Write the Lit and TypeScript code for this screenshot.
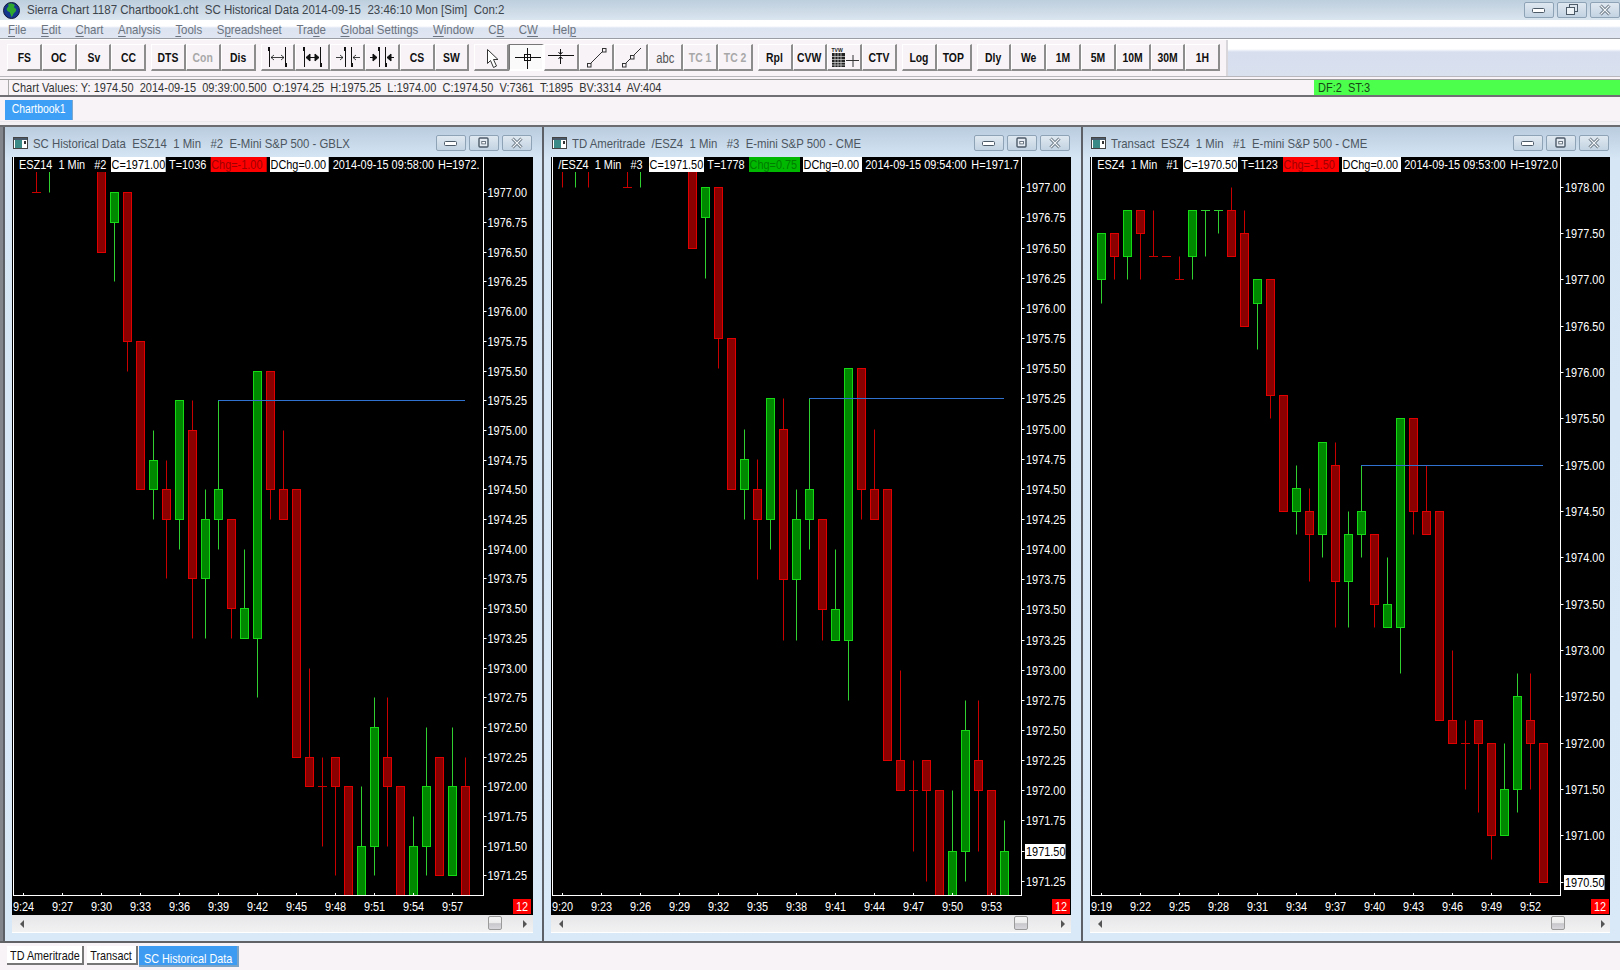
import { LitElement, html, css, svg } from "lit";
import { customElement } from "lit/decorators.js";

type Bar = [number, "r" | "g", number, number, number, number];
const BARS: Bar[] = [
  [19,"g",1977.5,1977.5,1977,1976.75],[20,"r",1977.5,1977.5,1977.25,1977],[21,"g",1977.75,1977.75,1977.25,1977],
  [22,"r",1977.75,1977.75,1977.5,1977],[23,"r",1977.75,1977.25,1977.25,1977.25],[24,"r",1977.25,1977.25,1977.25,1977.25],
  [25,"r",1977.25,1977,1977,1977],[26,"g",1977.75,1977.75,1977.25,1977],[27,"g",1977.75,1977.75,1977.75,1977.25],
  [28,"g",1977.75,1977.75,1977.75,1977.5],[29,"r",1978,1977.75,1977.25,1977.25],[30,"r",1977.75,1977.5,1976.5,1976.5],
  [31,"g",1977,1977,1976.75,1976.25],[32,"r",1977,1977,1975.75,1975.5],[33,"r",1975.75,1975.75,1974.5,1974.5],
  [34,"g",1975,1974.75,1974.5,1974.25],[35,"r",1974.75,1974.5,1974.25,1973.75],[36,"g",1975.25,1975.25,1974.25,1974],
  [37,"r",1975.25,1975,1973.75,1973.25],[38,"g",1974.5,1974.25,1973.75,1973.25],[39,"g",1975.25,1974.5,1974.25,1974],
  [40,"r",1974.25,1974.25,1973.5,1973.25],[41,"g",1974,1973.5,1973.25,1973.25],[42,"g",1975.5,1975.5,1973.25,1972.75],
  [43,"r",1975.5,1975.5,1974.5,1974.25],[44,"r",1975,1974.5,1974.25,1974.25],[45,"r",1974.5,1974.5,1972.25,1972.25],
  [46,"r",1973,1972.25,1972,1972],[47,"r",1972.25,1972,1972,1971.5],[48,"r",1972.25,1972.25,1972,1971.25],
  [49,"r",1972,1972,1971,1970.75],[50,"g",1972,1971.5,1971,1971],[51,"g",1972.75,1972.5,1971.5,1971.25],
  [52,"r",1972.75,1972.25,1972,1971.5],[53,"r",1972,1972,1970.5,1970.5],[54,"g",1971.75,1971.5,1971,1971],
  [55,"g",1972.5,1972,1971.5,1971.25],[56,"r",1972.25,1972.25,1971.25,1971.25],[57,"g",1972.5,1972,1971.25,1971.25],
  [58,"r",1972.25,1972,1971,1971],
];

interface Head { x: number; w: number; t: string; bg?: string; fg?: string; }
interface Chart {
  title: string; left: number; width: number; axisX: number; x0: number; firstMin: number; lastMin: number;
  refPrice: number; refY: number; ppp: number; top: number; bottom: number; step: number; hl?: number;
  blue: [number, number, number]; labelX: number; head: Head[]; thumb: number; over?: Record<number, number>; red: number;
  arrowL: number; arrowR: number;
}
const R = "#ff0000", RT = "#a00000", G = "#00b800", GT = "#007c00", W = "#ffffff", B = "#000000";
const CHARTS: Chart[] = [
  { title: "SC Historical Data  ESZ14  1 Min   #2  E-Mini S&P 500 - GBLX", left: 12, width: 521, axisX: 483.5, x0: 23.5, firstMin: 24, lastMin: 58,
    refPrice: 1977, refY: 192.3, ppp: 118.8, top: 1977, bottom: 1971.25, step: 0.25, blue: [218, 465, 1975.25], labelX: 487.5, thumb: 488, red: 513, arrowL: 20, arrowR: 523,
    head: [
      { x: 19, w: 88, t: "ESZ14  1 Min   #2" }, { x: 111, w: 54.7, t: "C=1971.00", bg: W, fg: B }, { x: 169, w: 38, t: "T=1036" },
      { x: 210.7, w: 56, t: "Chg=-1.00", bg: R, fg: RT }, { x: 270, w: 58.7, t: "DChg=0.00", bg: W, fg: B },
      { x: 332.7, w: 102, t: "2014-09-15 09:58:00" }, { x: 438, w: 44, t: "H=1972." } ] },
  { title: "TD Ameritrade  /ESZ4  1 Min   #3  E-mini S&P 500 - CME", left: 551, width: 520, axisX: 1021.5, x0: 562.5, firstMin: 20, lastMin: 54,
    refPrice: 1977, refY: 187.3, ppp: 120.6, top: 1977, bottom: 1971.25, step: 0.25, hl: 1971.5, blue: [809, 1004, 1975.25], labelX: 1026, thumb: 1014, red: 1052, arrowL: 559, arrowR: 1061,
    head: [
      { x: 558.3, w: 87, t: "/ESZ4  1 Min   #3" }, { x: 649, w: 55, t: "C=1971.50", bg: W, fg: B }, { x: 707.3, w: 38.4, t: "T=1778" },
      { x: 749, w: 51, t: "Chg=0.75", bg: G, fg: GT }, { x: 803, w: 59, t: "DChg=0.00", bg: W, fg: B },
      { x: 865.3, w: 102.4, t: "2014-09-15 09:54:00" }, { x: 971.3, w: 48.7, t: "H=1971.7" } ] },
  { title: "Transact  ESZ4  1 Min   #1  E-mini S&P 500 - CME", left: 1090, width: 520, axisX: 1560.5, x0: 1101.5, firstMin: 19, lastMin: 53,
    refPrice: 1978, refY: 186.7, ppp: 92.67, top: 1978, bottom: 1970.5, step: 0.5, hl: 1970.5, blue: [1361, 1543, 1975], labelX: 1565, thumb: 1551, red: 1591, arrowL: 1098, arrowR: 1601,
    over: { 39: 1975 },
    head: [
      { x: 1097.3, w: 82.7, t: "ESZ4  1 Min   #1" }, { x: 1183, w: 55, t: "C=1970.50", bg: W, fg: B }, { x: 1241.3, w: 38, t: "T=1123" },
      { x: 1283, w: 56, t: "Chg=-1.50", bg: R, fg: RT }, { x: 1342, w: 59, t: "DChg=0.00", bg: W, fg: B },
      { x: 1404.3, w: 102.4, t: "2014-09-15 09:53:00" }, { x: 1510.3, w: 49, t: "H=1972.0" } ] },
];

const TOP = 157, PLOT_B = 895, BOT = 915, SX = 0.84;
const crisp = (v: number) => Math.round(v) + 0.5;
const label = (x: number, y: number, s: string, fill: string, anchor = "start") =>
  svg`<text class="t" transform="translate(${x} ${y}) scale(${SX} 1)" text-anchor=${anchor} fill=${fill}>${s}</text>`;

function candle(c: Chart, b: Bar) {
  const [m, col, hi0, top, bot, lo] = b;
  const hi = c.over?.[m] ?? hi0;
  const x = c.x0 + (m - c.firstMin) * 13;
  const y = (p: number) => crisp(c.refY + (c.refPrice - p) * c.ppp);
  const edge = col === "r" ? "#e00000" : "#14d914";
  const fill = col === "r" ? "#8a0000" : "#008800";
  const wick = col === "r" ? "#c80000" : "#2fd02f";
  const parts = [];
  if (hi !== lo) parts.push(svg`<line x1=${x} x2=${x} y1=${y(hi)} y2=${y(lo)} stroke=${wick}></line>`);
  if (top === bot) parts.push(svg`<line x1=${x - 4.5} x2=${x + 4.5} y1=${y(top)} y2=${y(top)} stroke=${wick}></line>`);
  else parts.push(svg`<rect x=${x - 4} y=${y(top)} width="8" height=${y(bot) - y(top)} fill=${fill} stroke=${edge}></rect>`);
  return parts;
}

function chartSvg(c: Chart) {
  const bars = BARS.filter((b) => b[0] >= c.firstMin && b[0] <= c.lastMin);
  const prices: number[] = [];
  for (let p = c.top; p >= c.bottom - 0.001; p -= c.step) prices.push(p);
  const ticks: number[] = [];
  for (let k = 0; k < 12; k++) ticks.push(c.firstMin + k * 3);
  const y = (p: number) => c.refY + (c.refPrice - p) * c.ppp;
  const xt = (m: number) => c.x0 + (m - c.firstMin) * 13;
  const by = crisp(y(c.blue[2]));
  return html`<svg class="plot" width=${c.width} height=${BOT - TOP} viewBox="${c.left} ${TOP} ${c.width} ${BOT - TOP}">
    ${bars.map((b) => candle(c, b))}
    ${svg`<line x1=${c.blue[0]} x2=${c.blue[1]} y1=${by} y2=${by} stroke="#2f72d0"></line>`}
    ${svg`<rect x=${c.left} y=${TOP} width=${c.width} height="15" fill="#000"></rect>`}
    ${svg`<rect x=${c.left} y=${PLOT_B} width=${c.width} height=${BOT - PLOT_B} fill="#000"></rect>`}
    ${svg`<rect x=${c.axisX} y=${TOP} width=${c.left + c.width - c.axisX} height=${BOT - TOP} fill="#000"></rect>`}
    ${svg`<line x1=${c.left + 1.5} x2=${c.left + 1.5} y1=${TOP} y2=${PLOT_B} stroke="#fff"></line>`}
    ${svg`<line x1=${c.left + 1} x2=${c.axisX + 0.5} y1=${PLOT_B + 0.5} y2=${PLOT_B + 0.5} stroke="#fff"></line>`}
    ${svg`<line x1=${c.axisX} x2=${c.axisX} y1=${TOP} y2=${PLOT_B} stroke="#fff"></line>`}
    ${prices.map((p) => svg`
      <line x1=${c.axisX} x2=${c.axisX + 3} y1=${crisp(y(p))} y2=${crisp(y(p))} stroke="#fff"></line>
      ${p === c.hl ? svg`<rect x=${c.labelX - 1} y=${crisp(y(p)) - 7.5} width="40.5" height="15" fill="#fff"></rect>` : ""}
      ${label(c.labelX, crisp(y(p)) + 4.5, p.toFixed(2), p === c.hl ? "#000" : "#fff")}`)}
    ${ticks.map((m) => svg`
      <line x1=${xt(m)} x2=${xt(m)} y1=${PLOT_B - 2} y2=${PLOT_B} stroke="#fff"></line>
      ${label(xt(m), 911, "9:" + String(m), "#fff", "middle")}`)}
    ${svg`<rect x=${c.red} y="899" width="18" height="15" fill="#ff0000"></rect>`}
    ${label(c.red + 9, 911, "12", "#fff", "middle")}
    ${c.head.map((h) => svg`
      ${h.bg ? svg`<rect x=${h.x} y=${TOP} width=${h.w} height="15" fill=${h.bg}></rect>` : ""}
      ${label(h.x + (h.bg ? 0.5 : 0), 169, h.t, h.fg ?? "#fff")}`)}
  </svg>`;
}

const wrap = (b: unknown) => html`<svg class="ic" width="34" height="26" viewBox="0 0 34 26" fill="none" stroke="#111">${b}</svg>`;
const bars = (a: number, b: number) => svg`<path d="M${a}.5 3V23M${a - 1}.5 3V7M${b}.5 3V23M${b + 1}.5 19V23"></path>`;
const ICONS: Record<string, unknown> = {
  exp: wrap(svg`${bars(8, 24)}<path d="M10 13.5H23M13 11l-3 2.5 3 2.5M20 11l3 2.5-3 2.5" stroke-width=".8"></path>`),
  expB: wrap(svg`${bars(8, 24)}<path d="M10 13.5H23" ></path><path d="M14 10l-4 3.5 4 3.5zM19 10l4 3.5-4 3.5z" fill="#111"></path>`),
  con: wrap(svg`${bars(14, 20)}<path d="M5 13.5H12M9 11l3 2.5-3 2.5M29 13.5H22M25 11l-3 2.5 3 2.5" stroke-width=".8"></path>`),
  conB: wrap(svg`${bars(14, 20)}<path d="M5 13.5H12M29 13.5H22"></path><path d="M8 10l4 3.5-4 3.5zM26 10l-4 3.5 4 3.5z" fill="#111"></path>`),
  cursor: wrap(svg`<path d="M12.5 5.5V19.5L15.5 16.5L18.5 23.5L21.5 22L18.5 15.5H23Z" fill="#fff" stroke="#333"></path>`),
  cross: wrap(svg`<path d="M5 13.5H31M17.5 4V25"></path><rect x="14.5" y="10.5" width="6" height="6"></rect>`),
  split: wrap(svg`<path d="M4 11.5H30M16.5 5V10M16.5 13V20M14.5 8l2 2.5 2-2.5M14.5 15l2-2.5 2 2.5"></path>`),
  line: wrap(svg`<path d="M12 19L23 8" stroke="#333"></path><rect x="8.5" y="19.5" width="3.5" height="3.5" stroke="#333"></rect><rect x="23.5" y="4.5" width="3.5" height="3.5" stroke="#333"></rect>`),
  line2: wrap(svg`<path d="M12 19L17 14M20 11L27 4" stroke="#333"></path><rect x="8.5" y="19.5" width="3.5" height="3.5" stroke="#333"></rect><rect x="16.5" y="11.5" width="3.5" height="3.5" stroke="#333"></rect>`),
  grid: html`<svg class="ic" width="34" height="26" viewBox="0 0 34 26" fill="none" stroke="#111">
    ${svg`<text class="tiny" transform="translate(3.5 8) scale(.85 1)" fill="#222" stroke="none">TVW</text>
    <rect x="4" y="9" width="13" height="14" fill="#222" stroke="none"></rect>
    <path d="M4 12.5H17M4 15.5H17M4 18.5H17M4 21H17M7 9V23M10 9V23M13 9V23" stroke="#ddd" stroke-width=".7"></path>
    <path d="M18 16.5H31M25 11V23" stroke="#333"></path>`}
  </svg>`,
};

type Btn = { t?: string; ic?: string; cls?: string };
const GROUPS: Btn[][] = [
  [{ t: "FS" }, { t: "OC" }, { t: "Sv" }, { t: "CC" }],
  [{ t: "DTS" }, { t: "Con", cls: "dis" }, { t: "Dis" }],
  [{ ic: "exp" }, { ic: "expB" }, { ic: "con" }, { ic: "conB" }, { t: "CS" }, { t: "SW" }],
  [{ ic: "cursor" }, { ic: "cross", cls: "on" }, { ic: "split" }, { ic: "line" }, { ic: "line2" }, { t: "abc", cls: "abc" }, { t: "TC 1", cls: "dis" }, { t: "TC 2", cls: "dis" }],
  [{ t: "Rpl" }, { t: "CVW" }, { ic: "grid" }, { t: "CTV" }],
  [{ t: "Log" }, { t: "TOP" }],
  [{ t: "Dly" }, { t: "We" }, { t: "1M" }, { t: "5M" }, { t: "10M" }, { t: "30M" }, { t: "1H" }],
];

const MENU: [string, string, string][] = [
  ["", "F", "ile"], ["", "E", "dit"], ["", "C", "hart"], ["", "A", "nalysis"], ["", "T", "ools"], ["S", "p", "readsheet"],
  ["Tra", "d", "e"], ["", "G", "lobal Settings"], ["", "W", "indow"], ["C", "B", ""], ["C", "W", ""], ["Hel", "p", ""],
];

const ctlMin = html`<svg width="14" height="8" viewBox="0 0 14 8"><rect x=".5" y="2.5" width="12" height="4" rx="1" fill="#fff" stroke="#4c5a68"></rect></svg>`;
const ctlBox = html`<svg width="12" height="12" viewBox="0 0 12 12"><rect x="1" y="1" width="9" height="9" rx="1" fill="#e4ebf2" stroke="#4c5a68" stroke-width="1.4"></rect><rect x="3.8" y="4.5" width="3.6" height="2.4" fill="#fff" stroke="#4c5a68" stroke-width=".8"></rect></svg>`;
const ctlRest = html`<svg width="14" height="12" viewBox="0 0 14 12"><rect x="4.5" y=".5" width="8" height="7" fill="#dce5ee" stroke="#4c5a68"></rect><rect x="1.5" y="3.5" width="8" height="7" fill="#eef3f8" stroke="#4c5a68"></rect></svg>`;
const ctlX = html`<svg width="14" height="12" viewBox="0 0 14 12"><path d="M2.5 1.5L11.5 10.5M11.5 1.5L2.5 10.5" stroke="#5c6a78" stroke-width="3"></path><path d="M2.5 1.5L11.5 10.5M11.5 1.5L2.5 10.5" stroke="#f4f7fa" stroke-width="1.2"></path></svg>`;

const docIcon = html`<svg class="doc" width="16" height="13" viewBox="0 0 16 13"><rect x=".5" y=".5" width="14" height="11" fill="#fff" stroke="#444"></rect><rect x="1" y="1" width="13" height="2" fill="#4a5a6a"></rect><rect x="2" y="3" width="7" height="8" fill="#3a8a88"></rect><rect x="11" y="4" width="2" height="3" fill="#333"></rect></svg>`;

const globe = html`<svg class="globe" width="17" height="17" viewBox="0 0 17 17">
  <circle cx="8.5" cy="8.5" r="8" fill="#14368f"></circle>
  <path d="M5 1.5C8 .8 11 1.5 12 3.5C10.5 4 11 6 12.5 6.5C14 7 13 10 11 11C10 12 10 14 8.5 15C7.5 13 7.5 11 6.5 10C4.5 9.5 3 8 4 6C5.5 5.5 6 3 5 1.5Z" fill="#2fa82f"></path>
  <circle cx="8.5" cy="8.5" r="8" fill="none" stroke="#111838" stroke-width="1"></circle></svg>`;

@customElement("app-root")
export class AppRoot extends LitElement {
  static styles = css`
    :host { display: block; width: 1620px; height: 970px; overflow: hidden; background: #f7f3f7; color: #333;
      font-family: "Liberation Sans", sans-serif; font-size: 13px; line-height: 15px; }
    .t { font-family: "Liberation Sans", sans-serif; font-size: 13px; white-space: pre; }
    .tiny { font-family: "Liberation Sans", sans-serif; font-size: 6px; font-weight: bold; }
    .sq { display: inline-block; transform: scaleX(.848); transform-origin: 0 50%; white-space: pre; }
    .sc { display: inline-block; transform: scaleX(.8); transform-origin: 50% 50%; white-space: pre; }
    .title { height: 20px; display: flex; align-items: center; background: linear-gradient(#bdcedd, #dae5ef); color: #3c444c; white-space: pre; }
    .title .sq { margin-top: -2px; transform: scaleX(.886); }
    .globe { margin: 0 7px 0 3px; flex: none; }
    .ctls { margin-left: auto; display: flex; gap: 3px; }
    .ctl { width: 30px; height: 16px; box-sizing: border-box; display: flex; align-items: center; justify-content: center;
      border: 1px solid #8fa3b6; border-radius: 2px; background: linear-gradient(#dfe8f0, #c3d3e2); }
    .menu { height: 19px; box-sizing: border-box; border-bottom: 1px solid #9a9ea4; padding: 2px 0 0 8px;
      background: linear-gradient(#fff 0, #fff 6px, #dde4f1 8px, #e0e6f2 100%); color: #6c7480; }
    .menu .in { display: flex; gap: 16.55px; transform: scaleX(.882); transform-origin: 0 50%; width: 900px; }
    .bar { height: 38px; box-sizing: border-box; display: flex; border-bottom: 1px solid #b8b8bc; background: #f7f3f7; border-top: 1px solid #fff; }
    .groups { width: 1228px; flex: none; box-sizing: border-box; padding: 4px 0 0 7px; display: flex; gap: 5px; border-right: 2px solid #d8d6da; }
    .group { display: flex; }
    .btn { width: 34.8px; height: 27px; box-sizing: border-box; display: flex; align-items: center; justify-content: center; background: #f7f3f7;
      border: 1px solid; border-color: #fff #8c8c8c #8c8c8c #fff; border-width: 1px 2px 2px 1px; font-weight: bold; color: #101010; }
    .btn.dis { color: #a8a8a8; }
    .btn.abc { font-weight: normal; font-size: 14px; color: #555; padding-top: 3px; }
    .btn.on { border-color: #777 #fff #fff #777; background: #fbfafb; }
    .ic { flex: none; margin: -1px -2px 0 -1px; }
    .rest { flex: 1; background: linear-gradient(#fff 0, #fff 9px, #d7deee 12px, #d9e0ee 100%); }
    .status { height: 18px; margin-top: 2px; box-sizing: border-box; display: flex; border-top: 1px solid #9c9c9c; border-bottom: 2px solid #707074; white-space: pre; }
    .sv { width: 1312px; flex: none; box-sizing: border-box; padding-left: 8px; }
    .sv > div { border-left: 1px solid #aaa; padding-left: 3px; }
    .df { flex: 1; margin-left: 2px; background: #4dff4d; padding-left: 4px; color: #154515; }
    .tabstrip { height: 28px; box-sizing: border-box; padding: 3px 0 0 5px; background: linear-gradient(#f7f3f7 0, #f7f3f7 24px, #e2e0e4 24px, #f3f1f4 25px); }
    .tab0 { width: 68px; height: 20px; box-sizing: border-box; background: #3da0f6; color: #fff; text-align: center; line-height: 18px; border-right: 1px solid #7fa8cc; }
    .desk { height: 818px; box-sizing: border-box; border-top: 2px solid #6a6c70; border-bottom: 2px solid #606266; padding-left: 3px; display: grid;
      grid-template-columns: repeat(3, 539px); background: #777a80; box-shadow: inset 3px 0 0 #82868c; }
    .win { box-sizing: border-box; border-left: 2px solid #5c6066; padding-left: 7px; display: flex; flex-direction: column;
      background: linear-gradient(#b9ccde 0, #d6e6f5 32px, #d9e9f8 100%); }
    .wt { height: 30px; display: flex; align-items: center; padding: 2px 1px 0 1px; box-sizing: border-box; color: #4c5660; white-space: pre; }
    .wt .sq { transform: scaleX(.874); }
    .doc { margin-right: 4px; flex: none; }
    .plot { display: block; background: #000; }
    .sb { height: 17px; position: relative; background: linear-gradient(#e6e6e8, #f2f2f3); border-bottom: 1px solid #fff; box-sizing: content-box; }
    .arr { position: absolute; top: 5px; width: 0; height: 0; border: 4px solid transparent; }
    .arr.l { border-right: 4px solid #555; border-left-width: 0; }
    .arr.r { border-left: 4px solid #555; border-right-width: 0; }
    .thumb { position: absolute; top: 1px; width: 14px; height: 14px; box-sizing: border-box; border: 1px solid #9a9a9a; border-radius: 2px; background: linear-gradient(#f4f4f4 0, #ececec 50%, #c8c8cc 55%, #d8d8dc 100%); }
    .tabs { height: 27px; box-sizing: border-box; padding: 3px 0 0 7px; display: flex; gap: 3px; align-items: flex-start; }
    .tb { height: 19px; box-sizing: border-box; background: #fff; border-right: 2px solid #777; border-bottom: 2px solid #777; line-height: 20px; color: #111; white-space: nowrap; display: flex; justify-content: center; }
    .tb.a { width: 77px; } .tb.b { width: 51px; }
    .tb .sc { transform: scaleX(.83); flex: none; }
    .tb.c { width: 100px; height: 21px; margin-left: -2px; background: #3d9cf2; color: #fff; border-color: #7ba3c6; line-height: 25px; }
    u { text-decoration-thickness: 1px; text-underline-offset: 2px; }
  `;

  render() {
    return html`
      <div class="title">${globe}<span class="sq">Sierra Chart 1187 Chartbook1.cht  SC Historical Data 2014-09-15  23:46:10 Mon [Sim]  Con:2</span>
        <div class="ctls"><div class="ctl">${ctlMin}</div><div class="ctl">${ctlRest}</div><div class="ctl">${ctlX}</div></div></div>
      <div class="menu"><div class="in">${MENU.map(([a, b, c]) => html`<span>${a}<u>${b}</u>${c}</span>`)}</div></div>
      <div class="bar"><div class="groups">${GROUPS.map((g) => html`<div class="group">${g.map((b) => html`<div class="btn ${b.cls ?? ""}">${b.ic ? ICONS[b.ic] : html`<span class="sc">${b.t}</span>`}</div>`)}</div>`)}</div><div class="rest"></div></div>
      <div class="status"><div class="sv"><div><span class="sq">Chart Values: Y: 1974.50  2014-09-15  09:39:00.500  O:1974.25  H:1975.25  L:1974.00  C:1974.50  V:7361  T:1895  BV:3314  AV:404</span></div></div><div class="df"><span class="sq">DF:2  ST:3</span></div></div>
      <div class="tabstrip"><div class="tab0"><span class="sc">Chartbook1</span></div></div>
      <div class="desk">${CHARTS.map((c) => html`
        <div class="win"><div style="width:${c.width}px">
          <div class="wt">${docIcon}<span class="sq">${c.title}</span>
            <div class="ctls"><div class="ctl">${ctlMin}</div><div class="ctl">${ctlBox}</div><div class="ctl">${ctlX}</div></div></div>
          ${chartSvg(c)}
          <div class="sb">
            <div class="arr l" style="left:${c.arrowL - c.left}px"></div>
            <div class="thumb" style="left:${c.thumb - c.left}px"></div>
            <div class="arr r" style="left:${c.arrowR - c.left}px"></div>
          </div>
        </div></div>`)}</div>
      <div class="tabs"><div class="tb a"><span class="sc">TD Ameritrade</span></div><div class="tb b"><span class="sc">Transact</span></div><div class="tb c"><span class="sc">SC Historical Data</span></div></div>
    `;
  }
}
